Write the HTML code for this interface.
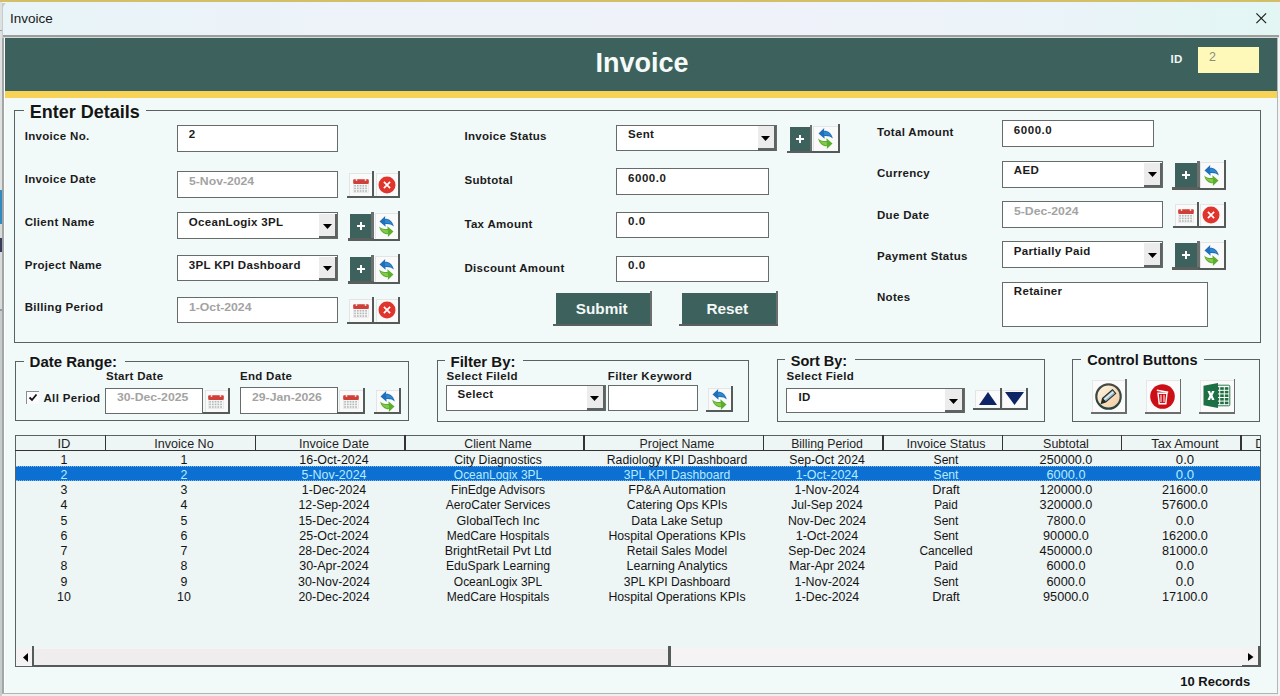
<!DOCTYPE html><html><head><meta charset="utf-8"><style>
html,body{margin:0;padding:0;}
body{width:1280px;height:696px;position:relative;overflow:hidden;background:#c3cdcb;font-family:"Liberation Sans", sans-serif;}
.a{position:absolute;}
.t{position:absolute;white-space:nowrap;}
</style></head><body>

<div class="a" style="left:0.00px;top:0.00px;width:1280.00px;height:1.60px;background:#d3bf68;"></div>
<div class="a" style="left:0.00px;top:1.60px;width:1280.00px;height:0.80px;background:#fbf6e0;"></div>
<div class="a" style="left:2.50px;top:1.50px;width:1277.50px;height:694.50px;background:#f2f9f9;border-top-left-radius:7px;border-top-right-radius:7px;"></div>
<div class="a" style="left:0.00px;top:2.40px;width:2.30px;height:187.60px;background:#dfe1e1;"></div>
<div class="a" style="left:0.00px;top:29.50px;width:2.30px;height:1.50px;background:#9a9a9a;"></div>
<div class="a" style="left:0.00px;top:190.00px;width:2.30px;height:34.00px;background:#2f8abd;"></div>
<div class="a" style="left:0.00px;top:224.00px;width:2.30px;height:86.00px;background:#d9dbdb;"></div>
<div class="a" style="left:0.00px;top:238.00px;width:2.30px;height:14.00px;background:#353c5c;"></div>
<div class="a" style="left:0.00px;top:309.00px;width:2.30px;height:1.50px;background:#9a9a9a;"></div>
<div class="a" style="left:0.00px;top:310.50px;width:2.30px;height:385.50px;background:#c6cccb;"></div>
<div class="a" style="left:1270.00px;top:2.40px;width:10.00px;height:37.60px;background:#eef1f1;"></div>
<div class="a" style="left:2.50px;top:1.50px;width:1276.00px;height:33.50px;background:linear-gradient(90deg,#e8f4f7 0%,#eef3f9 30%,#f0f2fa 60%,#eaf4f8 85%,#e2f6f4 100%);border-top-left-radius:7px;border-top-right-radius:7px;"></div>
<div class="t" style="left:10.00px;top:11.57px;font-size:13.5px;line-height:13.5px;font-weight:normal;color:#1a1a1a;">Invoice</div>
<svg class="a" style="left:1256px;top:13px" width="10.5" height="10.5" viewBox="0 0 10.5 10.5"><path d="M0.4 0.4L10.1 10.1M10.1 0.4L0.4 10.1" stroke="#1a1a1a" stroke-width="1.15"/></svg>
<div class="a" style="left:2.50px;top:35.00px;width:1276.00px;height:1.50px;background:#9c9e9e;"></div>
<div class="a" style="left:2.50px;top:36.50px;width:1276.00px;height:1.50px;background:#d3dad7;"></div>
<div class="a" style="left:2.30px;top:38.00px;width:2.00px;height:658.00px;background:#a3a6a6;"></div>
<div class="a" style="left:4.30px;top:38.00px;width:1.00px;height:658.00px;background:#ffffff;"></div>
<div class="a" style="left:1277.20px;top:38.00px;width:1.20px;height:658.00px;background:#b3b7b7;"></div>
<div class="a" style="left:1278.40px;top:38.00px;width:1.60px;height:658.00px;background:#f3f5f5;"></div>
<div class="a" style="left:2.30px;top:692.50px;width:1275.70px;height:1.50px;background:#b0b4b4;"></div>
<div class="a" style="left:2.30px;top:694.00px;width:1277.70px;height:2.00px;background:#eef0f0;"></div>
<div class="a" style="left:4.80px;top:38.00px;width:1272.40px;height:52.50px;background:#3d625e;"></div>
<div class="a" style="left:4.80px;top:90.50px;width:1272.40px;height:7.00px;background:#f6d257;"></div>
<div class="t" style="left:492.00px;width:300px;text-align:center;top:50.14px;font-size:27px;line-height:27px;font-weight:bold;color:#f6fbf9;">Invoice</div>
<div class="t" style="left:1170.50px;top:53.87px;font-size:11.5px;line-height:11.5px;font-weight:bold;color:#f2f6f4;letter-spacing:0.32px;">ID</div>
<div class="a" style="left:1198.00px;top:47.30px;width:61.40px;height:25.90px;background:#fff9b9;"></div>
<div class="t" style="left:1209.00px;top:51.42px;font-size:12.5px;line-height:12.5px;font-weight:normal;color:#8b8b80;">2</div>
<div class="a" style="left:14.00px;top:110.00px;width:1246.50px;height:232.50px;border:1.6px solid #56635f;box-sizing:border-box;"></div>
<div class="a" style="left:23.70px;top:107.00px;width:122.00px;height:7.00px;background:#f2f9f9;"></div>
<div class="t" style="left:29.70px;top:102.96px;font-size:18px;line-height:18px;font-weight:bold;color:#141414;">Enter Details</div>
<div class="t" style="left:24.70px;top:130.87px;font-size:11.5px;line-height:11.5px;font-weight:bold;color:#1b1b1b;letter-spacing:0.32px;">Invoice No.</div>
<div class="t" style="left:24.70px;top:174.07px;font-size:11.5px;line-height:11.5px;font-weight:bold;color:#1b1b1b;letter-spacing:0.32px;">Invoice Date</div>
<div class="t" style="left:24.70px;top:216.97px;font-size:11.5px;line-height:11.5px;font-weight:bold;color:#1b1b1b;letter-spacing:0.32px;">Client Name</div>
<div class="t" style="left:24.70px;top:259.97px;font-size:11.5px;line-height:11.5px;font-weight:bold;color:#1b1b1b;letter-spacing:0.32px;">Project Name</div>
<div class="t" style="left:24.70px;top:301.97px;font-size:11.5px;line-height:11.5px;font-weight:bold;color:#1b1b1b;letter-spacing:0.32px;">Billing Period</div>
<div class="a" style="left:176.80px;top:124.80px;width:161.50px;height:26.90px;background:#ffffff;border:1.6px solid #666c6a;box-sizing:border-box;"></div>
<div class="t" style="left:188.80px;top:128.77px;font-size:11.5px;line-height:11.5px;font-weight:bold;color:#1b1b1b;letter-spacing:0.55px;">2</div>
<div class="a" style="left:176.80px;top:170.90px;width:161.50px;height:27.00px;background:#ffffff;border:1.6px solid #666c6a;box-sizing:border-box;"></div>
<div class="t" style="left:188.80px;top:176.49px;font-size:11px;line-height:11px;font-weight:bold;color:#a3a3a3;transform:scaleX(1.110);transform-origin:0 0;">5-Nov-2024</div>
<div class="a" style="left:349.00px;top:173.00px;width:23.20px;height:23.10px;background:#fafafa;border-top:1px solid #e4e6e6;border-left:1px solid #e4e6e6;box-sizing:border-box;"></div>
<div class="a" style="left:372.20px;top:171.00px;width:2.00px;height:27.10px;background:#555b59;"></div>
<div class="a" style="left:347.00px;top:196.10px;width:27.20px;height:2.00px;background:#555b59;"></div>
<svg class="a" style="left:351.60px;top:176.55px" width="18" height="16" viewBox="0 0 18 16">
<rect x="1.5" y="3" width="15" height="12.5" fill="#f7f7f7" stroke="#e0e0e0" stroke-width="0.6"/>
<rect x="1.2" y="2.2" width="15.6" height="4.8" rx="1.2" fill="#cf4038"/>
<circle cx="4.5" cy="3" r="0.9" fill="#fbe0dc"/><circle cx="13.5" cy="3" r="0.9" fill="#fbe0dc"/>
<g fill="#b4b8b8"><rect x="2.20" y="8.00" width="1.7" height="1.6"/><rect x="4.95" y="8.00" width="1.7" height="1.6"/><rect x="7.70" y="8.00" width="1.7" height="1.6"/><rect x="10.45" y="8.00" width="1.7" height="1.6"/><rect x="13.20" y="8.00" width="1.7" height="1.6"/><rect x="2.20" y="10.60" width="1.7" height="1.6"/><rect x="4.95" y="10.60" width="1.7" height="1.6"/><rect x="7.70" y="10.60" width="1.7" height="1.6"/><rect x="10.45" y="10.60" width="1.7" height="1.6"/><rect x="13.20" y="10.60" width="1.7" height="1.6"/><rect x="2.20" y="13.20" width="1.7" height="1.6"/><rect x="4.95" y="13.20" width="1.7" height="1.6"/><rect x="7.70" y="13.20" width="1.7" height="1.6"/><rect x="10.45" y="13.20" width="1.7" height="1.6"/><rect x="13.20" y="13.20" width="1.7" height="1.6"/></g>
</svg>
<div class="a" style="left:376.00px;top:173.00px;width:22.40px;height:23.10px;background:#fafafa;border-top:1px solid #e4e6e6;border-left:1px solid #e4e6e6;box-sizing:border-box;"></div>
<div class="a" style="left:398.40px;top:171.00px;width:2.00px;height:27.10px;background:#555b59;"></div>
<div class="a" style="left:374.00px;top:196.10px;width:26.40px;height:2.00px;background:#555b59;"></div>
<svg class="a" style="left:378px;top:176px" width="18" height="18" viewBox="0 0 18 18">
<circle cx="9" cy="9" r="8.5" fill="#e0352c"/><path d="M5.9 5.9L12.1 12.1M12.1 5.9L5.9 12.1" stroke="#fff" stroke-width="1.7"/></svg>
<div class="a" style="left:176.80px;top:212.40px;width:161.50px;height:26.40px;background:#ffffff;border:1.6px solid #666c6a;box-sizing:border-box;"></div>
<div class="a" style="left:318.80px;top:214.00px;width:18.50px;height:24.30px;background:#ececec;"></div>
<div class="a" style="left:335.30px;top:214.00px;width:2.00px;height:24.30px;background:#5d6361;"></div>
<div class="a" style="left:318.80px;top:235.80px;width:18.50px;height:2.50px;background:#5d6361;"></div>
<svg class="a" style="left:322.55px;top:223.65px" width="9" height="5" viewBox="0 0 9 5"><path d="M0 0H9L4.5 5Z" fill="#000"/></svg>
<div class="t" style="left:188.80px;top:217.47px;font-size:11.5px;line-height:11.5px;font-weight:bold;color:#1b1b1b;letter-spacing:0.32px;">OceanLogix 3PL</div>
<div class="a" style="left:350.20px;top:214.00px;width:21.10px;height:24.00px;background:#3d625e;"></div>
<div class="a" style="left:371.30px;top:212.00px;width:2.50px;height:28.50px;background:#6c706f;"></div>
<div class="a" style="left:347.70px;top:238.00px;width:26.10px;height:2.50px;background:#5a5f5d;"></div>
<svg class="a" style="left:355.75px;top:221.00px" width="10" height="10" viewBox="0 0 10 10"><path d="M5 1V9M1 5H9" stroke="#fff" stroke-width="2"/></svg>
<div class="a" style="left:374.60px;top:212.50px;width:23.80px;height:26.40px;background:#fafafa;border-top:1px solid #e4e6e6;border-left:1px solid #e4e6e6;box-sizing:border-box;"></div>
<div class="a" style="left:398.40px;top:210.50px;width:2.00px;height:30.40px;background:#555b59;"></div>
<div class="a" style="left:372.60px;top:238.90px;width:27.80px;height:2.00px;background:#555b59;"></div>
<svg class="a" style="left:378.00px;top:214.70px" width="17" height="22" viewBox="0 0 17 22">
<path d="M1.5 6.5 L7.2 1 L7 3.8 C10.8 3.6 14.8 6.2 15.8 11.6 C13.8 9.6 11.2 8.9 7.4 9.1 L7.6 11.8 Z" fill="#1f6fba"/>
<path d="M7 4.6 C10 4.6 13 6.5 14.5 9.5 C12.5 8.2 10 7.8 7.2 8 Z" fill="#3a9ad8" opacity="0.6"/>
<g transform="rotate(180 8.5 11.5)"><path d="M1.5 6.5 L7.2 1 L7 3.8 C10.8 3.6 14.8 6.2 15.8 11.6 C13.8 9.6 11.2 8.9 7.4 9.1 L7.6 11.8 Z" fill="#5aae2e"/>
<path d="M7 4.6 C10 4.6 13 6.5 14.5 9.5 C12.5 8.2 10 7.8 7.2 8 Z" fill="#9ad35a" opacity="0.7"/></g>
</svg>
<div class="a" style="left:176.80px;top:255.20px;width:161.50px;height:26.20px;background:#ffffff;border:1.6px solid #666c6a;box-sizing:border-box;"></div>
<div class="a" style="left:318.80px;top:256.80px;width:18.50px;height:24.10px;background:#ececec;"></div>
<div class="a" style="left:335.30px;top:256.80px;width:2.00px;height:24.10px;background:#5d6361;"></div>
<div class="a" style="left:318.80px;top:278.40px;width:18.50px;height:2.50px;background:#5d6361;"></div>
<svg class="a" style="left:322.55px;top:266.35px" width="9" height="5" viewBox="0 0 9 5"><path d="M0 0H9L4.5 5Z" fill="#000"/></svg>
<div class="t" style="left:188.80px;top:260.27px;font-size:11.5px;line-height:11.5px;font-weight:bold;color:#1b1b1b;letter-spacing:0.32px;">3PL KPI Dashboard</div>
<div class="a" style="left:350.20px;top:257.00px;width:21.10px;height:24.00px;background:#3d625e;"></div>
<div class="a" style="left:371.30px;top:255.00px;width:2.50px;height:28.50px;background:#6c706f;"></div>
<div class="a" style="left:347.70px;top:281.00px;width:26.10px;height:2.50px;background:#5a5f5d;"></div>
<svg class="a" style="left:355.75px;top:264.00px" width="10" height="10" viewBox="0 0 10 10"><path d="M5 1V9M1 5H9" stroke="#fff" stroke-width="2"/></svg>
<div class="a" style="left:374.60px;top:255.50px;width:23.80px;height:26.10px;background:#fafafa;border-top:1px solid #e4e6e6;border-left:1px solid #e4e6e6;box-sizing:border-box;"></div>
<div class="a" style="left:398.40px;top:253.50px;width:2.00px;height:30.10px;background:#555b59;"></div>
<div class="a" style="left:372.60px;top:281.60px;width:27.80px;height:2.00px;background:#555b59;"></div>
<svg class="a" style="left:378.00px;top:257.55px" width="17" height="22" viewBox="0 0 17 22">
<path d="M1.5 6.5 L7.2 1 L7 3.8 C10.8 3.6 14.8 6.2 15.8 11.6 C13.8 9.6 11.2 8.9 7.4 9.1 L7.6 11.8 Z" fill="#1f6fba"/>
<path d="M7 4.6 C10 4.6 13 6.5 14.5 9.5 C12.5 8.2 10 7.8 7.2 8 Z" fill="#3a9ad8" opacity="0.6"/>
<g transform="rotate(180 8.5 11.5)"><path d="M1.5 6.5 L7.2 1 L7 3.8 C10.8 3.6 14.8 6.2 15.8 11.6 C13.8 9.6 11.2 8.9 7.4 9.1 L7.6 11.8 Z" fill="#5aae2e"/>
<path d="M7 4.6 C10 4.6 13 6.5 14.5 9.5 C12.5 8.2 10 7.8 7.2 8 Z" fill="#9ad35a" opacity="0.7"/></g>
</svg>
<div class="a" style="left:176.80px;top:296.50px;width:161.50px;height:26.30px;background:#ffffff;border:1.6px solid #666c6a;box-sizing:border-box;"></div>
<div class="t" style="left:188.80px;top:302.09px;font-size:11px;line-height:11px;font-weight:bold;color:#a3a3a3;transform:scaleX(1.110);transform-origin:0 0;">1-Oct-2024</div>
<div class="a" style="left:349.00px;top:298.50px;width:23.20px;height:23.00px;background:#fafafa;border-top:1px solid #e4e6e6;border-left:1px solid #e4e6e6;box-sizing:border-box;"></div>
<div class="a" style="left:372.20px;top:296.50px;width:2.00px;height:27.00px;background:#555b59;"></div>
<div class="a" style="left:347.00px;top:321.50px;width:27.20px;height:2.00px;background:#555b59;"></div>
<svg class="a" style="left:351.60px;top:302.00px" width="18" height="16" viewBox="0 0 18 16">
<rect x="1.5" y="3" width="15" height="12.5" fill="#f7f7f7" stroke="#e0e0e0" stroke-width="0.6"/>
<rect x="1.2" y="2.2" width="15.6" height="4.8" rx="1.2" fill="#cf4038"/>
<circle cx="4.5" cy="3" r="0.9" fill="#fbe0dc"/><circle cx="13.5" cy="3" r="0.9" fill="#fbe0dc"/>
<g fill="#b4b8b8"><rect x="2.20" y="8.00" width="1.7" height="1.6"/><rect x="4.95" y="8.00" width="1.7" height="1.6"/><rect x="7.70" y="8.00" width="1.7" height="1.6"/><rect x="10.45" y="8.00" width="1.7" height="1.6"/><rect x="13.20" y="8.00" width="1.7" height="1.6"/><rect x="2.20" y="10.60" width="1.7" height="1.6"/><rect x="4.95" y="10.60" width="1.7" height="1.6"/><rect x="7.70" y="10.60" width="1.7" height="1.6"/><rect x="10.45" y="10.60" width="1.7" height="1.6"/><rect x="13.20" y="10.60" width="1.7" height="1.6"/><rect x="2.20" y="13.20" width="1.7" height="1.6"/><rect x="4.95" y="13.20" width="1.7" height="1.6"/><rect x="7.70" y="13.20" width="1.7" height="1.6"/><rect x="10.45" y="13.20" width="1.7" height="1.6"/><rect x="13.20" y="13.20" width="1.7" height="1.6"/></g>
</svg>
<div class="a" style="left:376.00px;top:298.50px;width:22.40px;height:23.00px;background:#fafafa;border-top:1px solid #e4e6e6;border-left:1px solid #e4e6e6;box-sizing:border-box;"></div>
<div class="a" style="left:398.40px;top:296.50px;width:2.00px;height:27.00px;background:#555b59;"></div>
<div class="a" style="left:374.00px;top:321.50px;width:26.40px;height:2.00px;background:#555b59;"></div>
<svg class="a" style="left:378px;top:301px" width="18" height="18" viewBox="0 0 18 18">
<circle cx="9" cy="9" r="8.5" fill="#e0352c"/><path d="M5.9 5.9L12.1 12.1M12.1 5.9L5.9 12.1" stroke="#fff" stroke-width="1.7"/></svg>
<div class="t" style="left:464.40px;top:130.87px;font-size:11.5px;line-height:11.5px;font-weight:bold;color:#1b1b1b;letter-spacing:0.32px;">Invoice Status</div>
<div class="t" style="left:464.40px;top:174.62px;font-size:11.5px;line-height:11.5px;font-weight:bold;color:#1b1b1b;letter-spacing:0.32px;">Subtotal</div>
<div class="t" style="left:464.40px;top:219.17px;font-size:11.5px;line-height:11.5px;font-weight:bold;color:#1b1b1b;letter-spacing:0.32px;">Tax Amount</div>
<div class="t" style="left:464.40px;top:263.37px;font-size:11.5px;line-height:11.5px;font-weight:bold;color:#1b1b1b;letter-spacing:0.32px;">Discount Amount</div>
<div class="a" style="left:616.20px;top:124.80px;width:160.80px;height:26.60px;background:#ffffff;border:1.6px solid #666c6a;box-sizing:border-box;"></div>
<div class="a" style="left:757.50px;top:126.40px;width:18.50px;height:24.50px;background:#ececec;"></div>
<div class="a" style="left:774.00px;top:126.40px;width:2.00px;height:24.50px;background:#5d6361;"></div>
<div class="a" style="left:757.50px;top:148.40px;width:18.50px;height:2.50px;background:#5d6361;"></div>
<svg class="a" style="left:761.25px;top:136.15px" width="9" height="5" viewBox="0 0 9 5"><path d="M0 0H9L4.5 5Z" fill="#000"/></svg>
<div class="t" style="left:628.00px;top:128.77px;font-size:11.5px;line-height:11.5px;font-weight:bold;color:#1b1b1b;letter-spacing:0.32px;">Sent</div>
<div class="a" style="left:789.50px;top:127.00px;width:20.00px;height:23.50px;background:#3d625e;"></div>
<div class="a" style="left:809.50px;top:125.00px;width:2.50px;height:28.00px;background:#6c706f;"></div>
<div class="a" style="left:787.00px;top:150.50px;width:25.00px;height:2.50px;background:#5a5f5d;"></div>
<svg class="a" style="left:794.50px;top:133.75px" width="10" height="10" viewBox="0 0 10 10"><path d="M5 1V9M1 5H9" stroke="#fff" stroke-width="2"/></svg>
<div class="a" style="left:813.00px;top:125.50px;width:24.50px;height:25.50px;background:#fafafa;border-top:1px solid #e4e6e6;border-left:1px solid #e4e6e6;box-sizing:border-box;"></div>
<div class="a" style="left:837.50px;top:123.50px;width:2.00px;height:29.50px;background:#555b59;"></div>
<div class="a" style="left:811.00px;top:151.00px;width:28.50px;height:2.00px;background:#555b59;"></div>
<svg class="a" style="left:816.75px;top:127.25px" width="17" height="22" viewBox="0 0 17 22">
<path d="M1.5 6.5 L7.2 1 L7 3.8 C10.8 3.6 14.8 6.2 15.8 11.6 C13.8 9.6 11.2 8.9 7.4 9.1 L7.6 11.8 Z" fill="#1f6fba"/>
<path d="M7 4.6 C10 4.6 13 6.5 14.5 9.5 C12.5 8.2 10 7.8 7.2 8 Z" fill="#3a9ad8" opacity="0.6"/>
<g transform="rotate(180 8.5 11.5)"><path d="M1.5 6.5 L7.2 1 L7 3.8 C10.8 3.6 14.8 6.2 15.8 11.6 C13.8 9.6 11.2 8.9 7.4 9.1 L7.6 11.8 Z" fill="#5aae2e"/>
<path d="M7 4.6 C10 4.6 13 6.5 14.5 9.5 C12.5 8.2 10 7.8 7.2 8 Z" fill="#9ad35a" opacity="0.7"/></g>
</svg>
<div class="a" style="left:616.20px;top:168.40px;width:152.80px;height:27.10px;background:#ffffff;border:1.6px solid #666c6a;box-sizing:border-box;"></div>
<div class="t" style="left:628.00px;top:173.27px;font-size:11.5px;line-height:11.5px;font-weight:bold;color:#1b1b1b;letter-spacing:0.55px;">6000.0</div>
<div class="a" style="left:616.20px;top:211.90px;width:152.80px;height:26.50px;background:#ffffff;border:1.6px solid #666c6a;box-sizing:border-box;"></div>
<div class="t" style="left:628.00px;top:216.37px;font-size:11.5px;line-height:11.5px;font-weight:bold;color:#1b1b1b;letter-spacing:0.55px;">0.0</div>
<div class="a" style="left:616.20px;top:255.60px;width:152.80px;height:26.70px;background:#ffffff;border:1.6px solid #666c6a;box-sizing:border-box;"></div>
<div class="t" style="left:628.00px;top:260.07px;font-size:11.5px;line-height:11.5px;font-weight:bold;color:#1b1b1b;letter-spacing:0.55px;">0.0</div>
<div class="a" style="left:556.25px;top:293.20px;width:93.45px;height:30.50px;background:#3d625e;"></div>
<div class="a" style="left:649.70px;top:290.60px;width:2.00px;height:35.70px;background:#6a6f6d;"></div>
<div class="a" style="left:553.25px;top:323.70px;width:98.45px;height:2.60px;background:#5c6160;"></div>
<div class="t" style="left:501.68px;width:200px;text-align:center;top:300.55px;font-size:15.3px;line-height:15.3px;font-weight:bold;color:#f4f8f6;">Submit</div>
<div class="a" style="left:681.80px;top:293.20px;width:93.80px;height:30.50px;background:#3d625e;"></div>
<div class="a" style="left:775.60px;top:290.60px;width:2.00px;height:35.70px;background:#6a6f6d;"></div>
<div class="a" style="left:678.80px;top:323.70px;width:98.80px;height:2.60px;background:#5c6160;"></div>
<div class="t" style="left:627.40px;width:200px;text-align:center;top:300.55px;font-size:15.3px;line-height:15.3px;font-weight:bold;color:#f4f8f6;">Reset</div>
<div class="t" style="left:877.00px;top:126.87px;font-size:11.5px;line-height:11.5px;font-weight:bold;color:#1b1b1b;letter-spacing:0.32px;">Total Amount</div>
<div class="t" style="left:877.00px;top:168.07px;font-size:11.5px;line-height:11.5px;font-weight:bold;color:#1b1b1b;letter-spacing:0.32px;">Currency</div>
<div class="t" style="left:877.00px;top:210.07px;font-size:11.5px;line-height:11.5px;font-weight:bold;color:#1b1b1b;letter-spacing:0.32px;">Due Date</div>
<div class="t" style="left:877.00px;top:250.97px;font-size:11.5px;line-height:11.5px;font-weight:bold;color:#1b1b1b;letter-spacing:0.32px;">Payment Status</div>
<div class="t" style="left:877.00px;top:292.17px;font-size:11.5px;line-height:11.5px;font-weight:bold;color:#1b1b1b;letter-spacing:0.32px;">Notes</div>
<div class="a" style="left:1002.00px;top:120.20px;width:152.20px;height:26.50px;background:#ffffff;border:1.6px solid #666c6a;box-sizing:border-box;"></div>
<div class="t" style="left:1013.80px;top:124.67px;font-size:11.5px;line-height:11.5px;font-weight:bold;color:#1b1b1b;letter-spacing:0.55px;">6000.0</div>
<div class="a" style="left:1002.00px;top:161.00px;width:161.30px;height:26.50px;background:#ffffff;border:1.6px solid #666c6a;box-sizing:border-box;"></div>
<div class="a" style="left:1143.80px;top:162.60px;width:18.50px;height:24.40px;background:#ececec;"></div>
<div class="a" style="left:1160.30px;top:162.60px;width:2.00px;height:24.40px;background:#5d6361;"></div>
<div class="a" style="left:1143.80px;top:184.50px;width:18.50px;height:2.50px;background:#5d6361;"></div>
<svg class="a" style="left:1147.55px;top:172.30px" width="9" height="5" viewBox="0 0 9 5"><path d="M0 0H9L4.5 5Z" fill="#000"/></svg>
<div class="t" style="left:1013.80px;top:165.37px;font-size:11.5px;line-height:11.5px;font-weight:bold;color:#1b1b1b;letter-spacing:0.32px;">AED</div>
<div class="a" style="left:1174.60px;top:163.00px;width:22.70px;height:24.00px;background:#3d625e;"></div>
<div class="a" style="left:1197.30px;top:161.00px;width:2.50px;height:28.50px;background:#6c706f;"></div>
<div class="a" style="left:1172.10px;top:187.00px;width:27.70px;height:2.50px;background:#5a5f5d;"></div>
<svg class="a" style="left:1180.95px;top:170.00px" width="10" height="10" viewBox="0 0 10 10"><path d="M5 1V9M1 5H9" stroke="#fff" stroke-width="2"/></svg>
<div class="a" style="left:1199.50px;top:161.50px;width:24.00px;height:26.20px;background:#fafafa;border-top:1px solid #e4e6e6;border-left:1px solid #e4e6e6;box-sizing:border-box;"></div>
<div class="a" style="left:1223.50px;top:159.50px;width:2.00px;height:30.20px;background:#555b59;"></div>
<div class="a" style="left:1197.50px;top:187.70px;width:28.00px;height:2.00px;background:#555b59;"></div>
<svg class="a" style="left:1203.00px;top:163.60px" width="17" height="22" viewBox="0 0 17 22">
<path d="M1.5 6.5 L7.2 1 L7 3.8 C10.8 3.6 14.8 6.2 15.8 11.6 C13.8 9.6 11.2 8.9 7.4 9.1 L7.6 11.8 Z" fill="#1f6fba"/>
<path d="M7 4.6 C10 4.6 13 6.5 14.5 9.5 C12.5 8.2 10 7.8 7.2 8 Z" fill="#3a9ad8" opacity="0.6"/>
<g transform="rotate(180 8.5 11.5)"><path d="M1.5 6.5 L7.2 1 L7 3.8 C10.8 3.6 14.8 6.2 15.8 11.6 C13.8 9.6 11.2 8.9 7.4 9.1 L7.6 11.8 Z" fill="#5aae2e"/>
<path d="M7 4.6 C10 4.6 13 6.5 14.5 9.5 C12.5 8.2 10 7.8 7.2 8 Z" fill="#9ad35a" opacity="0.7"/></g>
</svg>
<div class="a" style="left:1002.00px;top:201.30px;width:161.30px;height:26.50px;background:#ffffff;border:1.6px solid #666c6a;box-sizing:border-box;"></div>
<div class="t" style="left:1013.80px;top:206.29px;font-size:11px;line-height:11px;font-weight:bold;color:#a3a3a3;transform:scaleX(1.110);transform-origin:0 0;">5-Dec-2024</div>
<div class="a" style="left:1174.60px;top:203.50px;width:22.70px;height:22.50px;background:#fafafa;border-top:1px solid #e4e6e6;border-left:1px solid #e4e6e6;box-sizing:border-box;"></div>
<div class="a" style="left:1197.30px;top:201.50px;width:2.00px;height:26.50px;background:#555b59;"></div>
<div class="a" style="left:1172.60px;top:226.00px;width:26.70px;height:2.00px;background:#555b59;"></div>
<svg class="a" style="left:1176.95px;top:206.75px" width="18" height="16" viewBox="0 0 18 16">
<rect x="1.5" y="3" width="15" height="12.5" fill="#f7f7f7" stroke="#e0e0e0" stroke-width="0.6"/>
<rect x="1.2" y="2.2" width="15.6" height="4.8" rx="1.2" fill="#cf4038"/>
<circle cx="4.5" cy="3" r="0.9" fill="#fbe0dc"/><circle cx="13.5" cy="3" r="0.9" fill="#fbe0dc"/>
<g fill="#b4b8b8"><rect x="2.20" y="8.00" width="1.7" height="1.6"/><rect x="4.95" y="8.00" width="1.7" height="1.6"/><rect x="7.70" y="8.00" width="1.7" height="1.6"/><rect x="10.45" y="8.00" width="1.7" height="1.6"/><rect x="13.20" y="8.00" width="1.7" height="1.6"/><rect x="2.20" y="10.60" width="1.7" height="1.6"/><rect x="4.95" y="10.60" width="1.7" height="1.6"/><rect x="7.70" y="10.60" width="1.7" height="1.6"/><rect x="10.45" y="10.60" width="1.7" height="1.6"/><rect x="13.20" y="10.60" width="1.7" height="1.6"/><rect x="2.20" y="13.20" width="1.7" height="1.6"/><rect x="4.95" y="13.20" width="1.7" height="1.6"/><rect x="7.70" y="13.20" width="1.7" height="1.6"/><rect x="10.45" y="13.20" width="1.7" height="1.6"/><rect x="13.20" y="13.20" width="1.7" height="1.6"/></g>
</svg>
<div class="a" style="left:1199.50px;top:203.50px;width:24.00px;height:22.50px;background:#fafafa;border-top:1px solid #e4e6e6;border-left:1px solid #e4e6e6;box-sizing:border-box;"></div>
<div class="a" style="left:1223.50px;top:201.50px;width:2.00px;height:26.50px;background:#555b59;"></div>
<div class="a" style="left:1197.50px;top:226.00px;width:28.00px;height:2.00px;background:#555b59;"></div>
<svg class="a" style="left:1202px;top:206px" width="18" height="18" viewBox="0 0 18 18">
<circle cx="9" cy="9" r="8.5" fill="#e0352c"/><path d="M5.9 5.9L12.1 12.1M12.1 5.9L5.9 12.1" stroke="#fff" stroke-width="1.7"/></svg>
<div class="a" style="left:1002.00px;top:241.20px;width:161.30px;height:26.60px;background:#ffffff;border:1.6px solid #666c6a;box-sizing:border-box;"></div>
<div class="a" style="left:1143.80px;top:242.80px;width:18.50px;height:24.50px;background:#ececec;"></div>
<div class="a" style="left:1160.30px;top:242.80px;width:2.00px;height:24.50px;background:#5d6361;"></div>
<div class="a" style="left:1143.80px;top:264.80px;width:18.50px;height:2.50px;background:#5d6361;"></div>
<svg class="a" style="left:1147.55px;top:252.55px" width="9" height="5" viewBox="0 0 9 5"><path d="M0 0H9L4.5 5Z" fill="#000"/></svg>
<div class="t" style="left:1013.80px;top:245.87px;font-size:11.5px;line-height:11.5px;font-weight:bold;color:#1b1b1b;letter-spacing:0.32px;">Partially Paid</div>
<div class="a" style="left:1174.60px;top:243.20px;width:22.70px;height:24.10px;background:#3d625e;"></div>
<div class="a" style="left:1197.30px;top:241.20px;width:2.50px;height:28.60px;background:#6c706f;"></div>
<div class="a" style="left:1172.10px;top:267.30px;width:27.70px;height:2.50px;background:#5a5f5d;"></div>
<svg class="a" style="left:1180.95px;top:250.25px" width="10" height="10" viewBox="0 0 10 10"><path d="M5 1V9M1 5H9" stroke="#fff" stroke-width="2"/></svg>
<div class="a" style="left:1199.50px;top:241.70px;width:24.00px;height:26.30px;background:#fafafa;border-top:1px solid #e4e6e6;border-left:1px solid #e4e6e6;box-sizing:border-box;"></div>
<div class="a" style="left:1223.50px;top:239.70px;width:2.00px;height:30.30px;background:#555b59;"></div>
<div class="a" style="left:1197.50px;top:268.00px;width:28.00px;height:2.00px;background:#555b59;"></div>
<svg class="a" style="left:1203.00px;top:243.85px" width="17" height="22" viewBox="0 0 17 22">
<path d="M1.5 6.5 L7.2 1 L7 3.8 C10.8 3.6 14.8 6.2 15.8 11.6 C13.8 9.6 11.2 8.9 7.4 9.1 L7.6 11.8 Z" fill="#1f6fba"/>
<path d="M7 4.6 C10 4.6 13 6.5 14.5 9.5 C12.5 8.2 10 7.8 7.2 8 Z" fill="#3a9ad8" opacity="0.6"/>
<g transform="rotate(180 8.5 11.5)"><path d="M1.5 6.5 L7.2 1 L7 3.8 C10.8 3.6 14.8 6.2 15.8 11.6 C13.8 9.6 11.2 8.9 7.4 9.1 L7.6 11.8 Z" fill="#5aae2e"/>
<path d="M7 4.6 C10 4.6 13 6.5 14.5 9.5 C12.5 8.2 10 7.8 7.2 8 Z" fill="#9ad35a" opacity="0.7"/></g>
</svg>
<div class="a" style="left:1002.00px;top:281.90px;width:205.60px;height:44.80px;background:#ffffff;border:1.6px solid #666c6a;box-sizing:border-box;"></div>
<div class="t" style="left:1013.80px;top:285.67px;font-size:11.5px;line-height:11.5px;font-weight:bold;color:#1b1b1b;letter-spacing:0.32px;">Retainer</div>
<div class="a" style="left:14.80px;top:360.60px;width:394.00px;height:60.70px;border:1.6px solid #56635f;box-sizing:border-box;"></div>
<div class="a" style="left:23.60px;top:357.60px;width:101.00px;height:7.00px;background:#f2f9f9;"></div>
<div class="t" style="left:29.60px;top:353.80px;font-size:15px;line-height:15px;font-weight:bold;color:#141414;">Date Range:</div>
<div class="t" style="left:105.90px;top:371.17px;font-size:11.5px;line-height:11.5px;font-weight:bold;color:#1b1b1b;letter-spacing:0.32px;">Start Date</div>
<div class="t" style="left:239.90px;top:371.17px;font-size:11.5px;line-height:11.5px;font-weight:bold;color:#1b1b1b;letter-spacing:0.32px;">End Date</div>
<div class="a" style="left:25.50px;top:391.40px;width:13.10px;height:12.20px;background:#fbfbfb;border-top:1.5px solid #8a8f8e;border-left:1.5px solid #8a8f8e;box-sizing:border-box;"></div>
<svg class="a" style="left:27.5px;top:393px" width="10" height="9" viewBox="0 0 10 9"><path d="M1.5 4.5L4 7L8.5 1.5" stroke="#111" stroke-width="1.8" fill="none"/></svg>
<div class="t" style="left:43.50px;top:392.87px;font-size:11.5px;line-height:11.5px;font-weight:bold;color:#1b1b1b;letter-spacing:0.32px;">All Period</div>
<div class="a" style="left:105.40px;top:387.70px;width:98.10px;height:26.20px;background:#ffffff;border:1.6px solid #666c6a;box-sizing:border-box;"></div>
<div class="t" style="left:117.40px;top:392.09px;font-size:11px;line-height:11px;font-weight:bold;color:#a3a3a3;transform:scaleX(1.110);transform-origin:0 0;">30-Dec-2025</div>
<div class="a" style="left:204.50px;top:389.50px;width:23.80px;height:22.50px;background:#fafafa;border-top:1px solid #e4e6e6;border-left:1px solid #e4e6e6;box-sizing:border-box;"></div>
<div class="a" style="left:228.30px;top:387.50px;width:2.00px;height:26.50px;background:#555b59;"></div>
<div class="a" style="left:202.50px;top:412.00px;width:27.80px;height:2.00px;background:#555b59;"></div>
<svg class="a" style="left:207.40px;top:392.75px" width="18" height="16" viewBox="0 0 18 16">
<rect x="1.5" y="3" width="15" height="12.5" fill="#f7f7f7" stroke="#e0e0e0" stroke-width="0.6"/>
<rect x="1.2" y="2.2" width="15.6" height="4.8" rx="1.2" fill="#cf4038"/>
<circle cx="4.5" cy="3" r="0.9" fill="#fbe0dc"/><circle cx="13.5" cy="3" r="0.9" fill="#fbe0dc"/>
<g fill="#b4b8b8"><rect x="2.20" y="8.00" width="1.7" height="1.6"/><rect x="4.95" y="8.00" width="1.7" height="1.6"/><rect x="7.70" y="8.00" width="1.7" height="1.6"/><rect x="10.45" y="8.00" width="1.7" height="1.6"/><rect x="13.20" y="8.00" width="1.7" height="1.6"/><rect x="2.20" y="10.60" width="1.7" height="1.6"/><rect x="4.95" y="10.60" width="1.7" height="1.6"/><rect x="7.70" y="10.60" width="1.7" height="1.6"/><rect x="10.45" y="10.60" width="1.7" height="1.6"/><rect x="13.20" y="10.60" width="1.7" height="1.6"/><rect x="2.20" y="13.20" width="1.7" height="1.6"/><rect x="4.95" y="13.20" width="1.7" height="1.6"/><rect x="7.70" y="13.20" width="1.7" height="1.6"/><rect x="10.45" y="13.20" width="1.7" height="1.6"/><rect x="13.20" y="13.20" width="1.7" height="1.6"/></g>
</svg>
<div class="a" style="left:239.50px;top:387.10px;width:98.00px;height:26.65px;background:#ffffff;border:1.6px solid #666c6a;box-sizing:border-box;"></div>
<div class="t" style="left:251.50px;top:392.09px;font-size:11px;line-height:11px;font-weight:bold;color:#a3a3a3;transform:scaleX(1.110);transform-origin:0 0;">29-Jan-2026</div>
<div class="a" style="left:338.50px;top:389.50px;width:24.80px;height:22.50px;background:#fafafa;border-top:1px solid #e4e6e6;border-left:1px solid #e4e6e6;box-sizing:border-box;"></div>
<div class="a" style="left:363.30px;top:387.50px;width:2.00px;height:26.50px;background:#555b59;"></div>
<div class="a" style="left:336.50px;top:412.00px;width:28.80px;height:2.00px;background:#555b59;"></div>
<svg class="a" style="left:341.90px;top:392.75px" width="18" height="16" viewBox="0 0 18 16">
<rect x="1.5" y="3" width="15" height="12.5" fill="#f7f7f7" stroke="#e0e0e0" stroke-width="0.6"/>
<rect x="1.2" y="2.2" width="15.6" height="4.8" rx="1.2" fill="#cf4038"/>
<circle cx="4.5" cy="3" r="0.9" fill="#fbe0dc"/><circle cx="13.5" cy="3" r="0.9" fill="#fbe0dc"/>
<g fill="#b4b8b8"><rect x="2.20" y="8.00" width="1.7" height="1.6"/><rect x="4.95" y="8.00" width="1.7" height="1.6"/><rect x="7.70" y="8.00" width="1.7" height="1.6"/><rect x="10.45" y="8.00" width="1.7" height="1.6"/><rect x="13.20" y="8.00" width="1.7" height="1.6"/><rect x="2.20" y="10.60" width="1.7" height="1.6"/><rect x="4.95" y="10.60" width="1.7" height="1.6"/><rect x="7.70" y="10.60" width="1.7" height="1.6"/><rect x="10.45" y="10.60" width="1.7" height="1.6"/><rect x="13.20" y="10.60" width="1.7" height="1.6"/><rect x="2.20" y="13.20" width="1.7" height="1.6"/><rect x="4.95" y="13.20" width="1.7" height="1.6"/><rect x="7.70" y="13.20" width="1.7" height="1.6"/><rect x="10.45" y="13.20" width="1.7" height="1.6"/><rect x="13.20" y="13.20" width="1.7" height="1.6"/></g>
</svg>
<div class="a" style="left:376.00px;top:389.50px;width:23.40px;height:22.50px;background:#fafafa;border-top:1px solid #e4e6e6;border-left:1px solid #e4e6e6;box-sizing:border-box;"></div>
<div class="a" style="left:399.40px;top:387.50px;width:2.00px;height:26.50px;background:#555b59;"></div>
<div class="a" style="left:374.00px;top:412.00px;width:27.40px;height:2.00px;background:#555b59;"></div>
<svg class="a" style="left:379.20px;top:389.75px" width="17" height="22" viewBox="0 0 17 22">
<path d="M1.5 6.5 L7.2 1 L7 3.8 C10.8 3.6 14.8 6.2 15.8 11.6 C13.8 9.6 11.2 8.9 7.4 9.1 L7.6 11.8 Z" fill="#1f6fba"/>
<path d="M7 4.6 C10 4.6 13 6.5 14.5 9.5 C12.5 8.2 10 7.8 7.2 8 Z" fill="#3a9ad8" opacity="0.6"/>
<g transform="rotate(180 8.5 11.5)"><path d="M1.5 6.5 L7.2 1 L7 3.8 C10.8 3.6 14.8 6.2 15.8 11.6 C13.8 9.6 11.2 8.9 7.4 9.1 L7.6 11.8 Z" fill="#5aae2e"/>
<path d="M7 4.6 C10 4.6 13 6.5 14.5 9.5 C12.5 8.2 10 7.8 7.2 8 Z" fill="#9ad35a" opacity="0.7"/></g>
</svg>
<div class="a" style="left:436.50px;top:360.10px;width:312.00px;height:61.90px;border:1.6px solid #56635f;box-sizing:border-box;"></div>
<div class="a" style="left:444.50px;top:357.10px;width:78.00px;height:7.00px;background:#f2f9f9;"></div>
<div class="t" style="left:450.50px;top:353.80px;font-size:15px;line-height:15px;font-weight:bold;color:#141414;">Filter By:</div>
<div class="t" style="left:446.60px;top:371.17px;font-size:11.5px;line-height:11.5px;font-weight:bold;color:#1b1b1b;letter-spacing:0.32px;">Select Fileld</div>
<div class="t" style="left:607.80px;top:371.17px;font-size:11.5px;line-height:11.5px;font-weight:bold;color:#1b1b1b;letter-spacing:0.32px;">Filter Keyword</div>
<div class="a" style="left:446.00px;top:384.80px;width:160.00px;height:26.60px;background:#ffffff;border:1.6px solid #666c6a;box-sizing:border-box;"></div>
<div class="a" style="left:586.50px;top:386.40px;width:18.50px;height:24.50px;background:#ececec;"></div>
<div class="a" style="left:603.00px;top:386.40px;width:2.00px;height:24.50px;background:#5d6361;"></div>
<div class="a" style="left:586.50px;top:408.40px;width:18.50px;height:2.50px;background:#5d6361;"></div>
<svg class="a" style="left:590.25px;top:396.15px" width="9" height="5" viewBox="0 0 9 5"><path d="M0 0H9L4.5 5Z" fill="#000"/></svg>
<div class="t" style="left:457.50px;top:389.37px;font-size:11.5px;line-height:11.5px;font-weight:bold;color:#1b1b1b;letter-spacing:0.32px;">Select</div>
<div class="a" style="left:607.80px;top:384.80px;width:90.00px;height:26.60px;background:#ffffff;border:1.6px solid #666c6a;box-sizing:border-box;"></div>
<div class="a" style="left:708.00px;top:388.00px;width:22.80px;height:22.00px;background:#fafafa;border-top:1px solid #e4e6e6;border-left:1px solid #e4e6e6;box-sizing:border-box;"></div>
<div class="a" style="left:730.80px;top:386.00px;width:2.00px;height:26.00px;background:#555b59;"></div>
<div class="a" style="left:706.00px;top:410.00px;width:26.80px;height:2.00px;background:#555b59;"></div>
<svg class="a" style="left:710.90px;top:388.00px" width="17" height="22" viewBox="0 0 17 22">
<path d="M1.5 6.5 L7.2 1 L7 3.8 C10.8 3.6 14.8 6.2 15.8 11.6 C13.8 9.6 11.2 8.9 7.4 9.1 L7.6 11.8 Z" fill="#1f6fba"/>
<path d="M7 4.6 C10 4.6 13 6.5 14.5 9.5 C12.5 8.2 10 7.8 7.2 8 Z" fill="#3a9ad8" opacity="0.6"/>
<g transform="rotate(180 8.5 11.5)"><path d="M1.5 6.5 L7.2 1 L7 3.8 C10.8 3.6 14.8 6.2 15.8 11.6 C13.8 9.6 11.2 8.9 7.4 9.1 L7.6 11.8 Z" fill="#5aae2e"/>
<path d="M7 4.6 C10 4.6 13 6.5 14.5 9.5 C12.5 8.2 10 7.8 7.2 8 Z" fill="#9ad35a" opacity="0.7"/></g>
</svg>
<div class="a" style="left:776.60px;top:359.40px;width:268.00px;height:62.60px;border:1.6px solid #56635f;box-sizing:border-box;"></div>
<div class="a" style="left:784.80px;top:356.40px;width:70.00px;height:7.00px;background:#f2f9f9;"></div>
<div class="t" style="left:790.80px;top:354.23px;font-size:14.5px;line-height:14.5px;font-weight:bold;color:#141414;">Sort By:</div>
<div class="t" style="left:786.40px;top:371.27px;font-size:11.5px;line-height:11.5px;font-weight:bold;color:#1b1b1b;letter-spacing:0.32px;">Select Field</div>
<div class="a" style="left:786.40px;top:387.70px;width:178.30px;height:25.60px;background:#ffffff;border:1.6px solid #666c6a;box-sizing:border-box;"></div>
<div class="a" style="left:945.20px;top:389.30px;width:18.50px;height:23.50px;background:#ececec;"></div>
<div class="a" style="left:961.70px;top:389.30px;width:2.00px;height:23.50px;background:#5d6361;"></div>
<div class="a" style="left:945.20px;top:410.30px;width:18.50px;height:2.50px;background:#5d6361;"></div>
<svg class="a" style="left:948.95px;top:398.55px" width="9" height="5" viewBox="0 0 9 5"><path d="M0 0H9L4.5 5Z" fill="#000"/></svg>
<div class="t" style="left:798.40px;top:392.07px;font-size:11.5px;line-height:11.5px;font-weight:bold;color:#1b1b1b;letter-spacing:0.32px;">ID</div>
<div class="a" style="left:974.50px;top:389.70px;width:25.20px;height:17.80px;background:#fafafa;border-top:1px solid #e4e6e6;border-left:1px solid #e4e6e6;box-sizing:border-box;"></div>
<div class="a" style="left:999.70px;top:387.70px;width:2.00px;height:21.80px;background:#555b59;"></div>
<div class="a" style="left:972.50px;top:407.50px;width:29.20px;height:2.00px;background:#555b59;"></div>
<svg class="a" style="left:979px;top:392px" width="18" height="13" viewBox="0 0 18 13"><path d="M9 0L18 13H0Z" fill="#0d2467"/></svg>
<div class="a" style="left:1002.10px;top:389.70px;width:23.90px;height:17.80px;background:#fafafa;border-top:1px solid #e4e6e6;border-left:1px solid #e4e6e6;box-sizing:border-box;"></div>
<div class="a" style="left:1026.00px;top:387.70px;width:2.00px;height:21.80px;background:#555b59;"></div>
<div class="a" style="left:1000.10px;top:407.50px;width:27.90px;height:2.00px;background:#555b59;"></div>
<svg class="a" style="left:1005px;top:392px" width="19" height="13" viewBox="0 0 19 13"><path d="M0 0H19L9.5 13Z" fill="#0d2467"/></svg>
<div class="a" style="left:1072.40px;top:359.30px;width:187.30px;height:62.50px;border:1.6px solid #56635f;box-sizing:border-box;"></div>
<div class="a" style="left:1081.20px;top:356.30px;width:123.00px;height:7.00px;background:#f2f9f9;"></div>
<div class="t" style="left:1087.20px;top:353.03px;font-size:14.5px;line-height:14.5px;font-weight:bold;color:#141414;">Control Buttons</div>
<div class="a" style="left:1092.30px;top:380.00px;width:33.00px;height:32.00px;background:#fbfbfb;border-top:1px solid #e6e8e8;border-left:1px solid #e6e8e8;box-sizing:border-box;"></div>
<div class="a" style="left:1125.30px;top:378.50px;width:1.60px;height:35.10px;background:#6a6f6e;"></div>
<div class="a" style="left:1090.80px;top:412.00px;width:36.10px;height:1.60px;background:#6a6f6e;"></div>
<svg class="a" style="left:1095px;top:382.5px" width="27" height="27" viewBox="0 0 27 27">
<defs><linearGradient id="eg" x1="0" y1="0" x2="1" y2="1"><stop offset="0" stop-color="#fdf6e6"/><stop offset="1" stop-color="#f3c99c"/></linearGradient>
<linearGradient id="er" x1="0" y1="0" x2="0" y2="1"><stop offset="0" stop-color="#4a4a44"/><stop offset="1" stop-color="#24463f"/></linearGradient></defs>
<circle cx="13.5" cy="13.5" r="12.2" fill="url(#eg)" stroke="url(#er)" stroke-width="2.2"/>
<path d="M5.6 21.2 L7.05 15.0 L17.55 6.0 L21.45 10.6 L10.95 19.6 Z" fill="#262b2a"/>
<path d="M8.3 15.4 L17.6 7.6 L20 10.5 L10.7 18.3 Z" fill="#9dbfcb"/>
<path d="M9 15.9 L17.8 8.5 L18.6 9.5 L9.8 16.9 Z" fill="#e8f2f4"/>
</svg>
<div class="a" style="left:1146.00px;top:380.00px;width:33.50px;height:32.00px;background:#fbfbfb;border-top:1px solid #e6e8e8;border-left:1px solid #e6e8e8;box-sizing:border-box;"></div>
<div class="a" style="left:1179.50px;top:378.50px;width:1.60px;height:35.10px;background:#6a6f6e;"></div>
<div class="a" style="left:1144.50px;top:412.00px;width:36.60px;height:1.60px;background:#6a6f6e;"></div>
<svg class="a" style="left:1150px;top:383.5px" width="25" height="25" viewBox="0 0 25 25">
<circle cx="12.5" cy="12.5" r="12.3" fill="#cc0f16"/>
<path d="M6.8 6.2 L18.2 8.2" stroke="#fff" stroke-width="1.6"/><path d="M8 9.2 L9.2 19.8 H15.8 L17 9.2Z" fill="none" stroke="#fff" stroke-width="1.4"/>
<path d="M11 10.8V18.2M14 10.8V18.2" stroke="#fff" stroke-width="1"/>
</svg>
<div class="a" style="left:1200.00px;top:380.00px;width:33.60px;height:32.00px;background:#fbfbfb;border-top:1px solid #e6e8e8;border-left:1px solid #e6e8e8;box-sizing:border-box;"></div>
<div class="a" style="left:1233.60px;top:378.50px;width:1.60px;height:35.10px;background:#6a6f6e;"></div>
<div class="a" style="left:1198.50px;top:412.00px;width:36.70px;height:1.60px;background:#6a6f6e;"></div>
<svg class="a" style="left:1203px;top:382px" width="28" height="27" viewBox="0 0 28 27">
<rect x="11" y="3.2" width="15.8" height="20.6" rx="1" fill="#fff" stroke="#2b7a4f" stroke-width="1"/>
<g fill="#1f6e42"><rect x="12.6" y="5.2" width="3.6" height="2.6"/><rect x="17.2" y="5.2" width="3.6" height="2.6"/><rect x="21.8" y="5.2" width="3.6" height="2.6"/><rect x="12.6" y="8.8" width="3.6" height="2.6"/><rect x="17.2" y="8.8" width="3.6" height="2.6"/><rect x="21.8" y="8.8" width="3.6" height="2.6"/><rect x="12.6" y="12.4" width="3.6" height="2.6"/><rect x="17.2" y="12.4" width="3.6" height="2.6"/><rect x="21.8" y="12.4" width="3.6" height="2.6"/><rect x="12.6" y="16.0" width="3.6" height="2.6"/><rect x="17.2" y="16.0" width="3.6" height="2.6"/><rect x="21.8" y="16.0" width="3.6" height="2.6"/><rect x="12.6" y="19.6" width="3.6" height="2.6"/><rect x="17.2" y="19.6" width="3.6" height="2.6"/><rect x="21.8" y="19.6" width="3.6" height="2.6"/></g>
<path d="M0.5 3.8 L15 1 V26 L0.5 23.2Z" fill="#1d7044"/>
<path d="M4.5 9 L7 9 L8 11.5 L9 9 L11.5 9 L9.5 13.5 L11.5 18 L9 18 L8 15.5 L7 18 L4.5 18 L6.5 13.5Z" fill="#fff"/>
</svg>
<div class="a" style="left:14.50px;top:435.00px;width:1246.50px;height:231.50px;background:#eef5f5;border-left:1.5px solid #5b6361;border-top:1.2px solid #5b6361;border-right:1.2px solid #5b6361;box-sizing:border-box;"></div>
<div class="a" style="left:14.50px;top:449.50px;width:1246.50px;height:1.50px;background:#333;"></div>
<div class="a" style="left:104.90px;top:435.00px;width:1.20px;height:15.00px;background:#333;"></div>
<div class="a" style="left:254.90px;top:435.00px;width:1.20px;height:15.00px;background:#333;"></div>
<div class="a" style="left:404.40px;top:435.00px;width:1.20px;height:15.00px;background:#333;"></div>
<div class="a" style="left:583.40px;top:435.00px;width:1.20px;height:15.00px;background:#333;"></div>
<div class="a" style="left:762.90px;top:435.00px;width:1.20px;height:15.00px;background:#333;"></div>
<div class="a" style="left:882.40px;top:435.00px;width:1.20px;height:15.00px;background:#333;"></div>
<div class="a" style="left:1001.90px;top:435.00px;width:1.20px;height:15.00px;background:#333;"></div>
<div class="a" style="left:1120.90px;top:435.00px;width:1.20px;height:15.00px;background:#333;"></div>
<div class="a" style="left:1240.40px;top:435.00px;width:1.20px;height:15.00px;background:#333;"></div>
<div class="a" style="left:14.5px;top:435px;width:1245.3px;height:231.5px;overflow:hidden;">
<div class="t" style="left:-100.80px;width:300px;text-align:center;top:3.02px;font-size:12.5px;line-height:12.5px;color:#1e1e1e;transform:scaleX(1.038);">ID</div>
<div class="t" style="left:19.70px;width:300px;text-align:center;top:3.02px;font-size:12.5px;line-height:12.5px;color:#1e1e1e;transform:scaleX(1.004);">Invoice No</div>
<div class="t" style="left:169.45px;width:300px;text-align:center;top:3.02px;font-size:12.5px;line-height:12.5px;color:#1e1e1e;transform:scaleX(1.005);">Invoice Date</div>
<div class="t" style="left:333.70px;width:300px;text-align:center;top:3.02px;font-size:12.5px;line-height:12.5px;color:#1e1e1e;transform:scaleX(0.980);">Client Name</div>
<div class="t" style="left:512.95px;width:300px;text-align:center;top:3.02px;font-size:12.5px;line-height:12.5px;color:#1e1e1e;transform:scaleX(0.987);">Project Name</div>
<div class="t" style="left:662.45px;width:300px;text-align:center;top:3.02px;font-size:12.5px;line-height:12.5px;color:#1e1e1e;transform:scaleX(0.982);">Billing Period</div>
<div class="t" style="left:781.95px;width:300px;text-align:center;top:3.02px;font-size:12.5px;line-height:12.5px;color:#1e1e1e;transform:scaleX(1.004);">Invoice Status</div>
<div class="t" style="left:901.20px;width:300px;text-align:center;top:3.02px;font-size:12.5px;line-height:12.5px;color:#1e1e1e;transform:scaleX(0.998);">Subtotal</div>
<div class="t" style="left:1020.45px;width:300px;text-align:center;top:3.02px;font-size:12.5px;line-height:12.5px;color:#1e1e1e;transform:scaleX(1.032);">Tax Amount</div>
<div class="t" style="left:1116.50px;width:300px;text-align:center;top:3.02px;font-size:12.5px;line-height:12.5px;color:#1e1e1e;transform:scaleX(0.977);">Due Date</div>
<div class="a" style="left:1px;top:31.19999999999999px;width:1260px;height:15.3px;background:#0c6fd2;border-top:1px dotted #7fb2ea;border-bottom:1px dotted #7fb2ea;box-sizing:border-box;"></div>
<div class="t" style="left:-100.80px;width:300px;text-align:center;top:18.72px;font-size:12.5px;line-height:12.5px;color:#141414;transform:scaleX(0.990);">1</div>
<div class="t" style="left:19.70px;width:300px;text-align:center;top:18.72px;font-size:12.5px;line-height:12.5px;color:#141414;transform:scaleX(0.990);">1</div>
<div class="t" style="left:169.45px;width:300px;text-align:center;top:18.72px;font-size:12.5px;line-height:12.5px;color:#141414;transform:scaleX(0.998);">16-Oct-2024</div>
<div class="t" style="left:333.70px;width:300px;text-align:center;top:18.72px;font-size:12.5px;line-height:12.5px;color:#141414;transform:scaleX(0.979);">City Diagnostics</div>
<div class="t" style="left:512.95px;width:300px;text-align:center;top:18.72px;font-size:12.5px;line-height:12.5px;color:#141414;transform:scaleX(0.976);">Radiology KPI Dashboard</div>
<div class="t" style="left:662.45px;width:300px;text-align:center;top:18.72px;font-size:12.5px;line-height:12.5px;color:#141414;transform:scaleX(0.979);">Sep-Oct 2024</div>
<div class="t" style="left:781.95px;width:300px;text-align:center;top:18.72px;font-size:12.5px;line-height:12.5px;color:#141414;transform:scaleX(0.967);">Sent</div>
<div class="t" style="left:901.20px;width:300px;text-align:center;top:18.72px;font-size:12.5px;line-height:12.5px;color:#141414;transform:scaleX(1.012);">250000.0</div>
<div class="t" style="left:1020.45px;width:300px;text-align:center;top:18.72px;font-size:12.5px;line-height:12.5px;color:#141414;transform:scaleX(1.055);">0.0</div>
<div class="t" style="left:-100.80px;width:300px;text-align:center;top:33.95px;font-size:12.5px;line-height:12.5px;color:#b5ecff;transform:scaleX(0.990);">2</div>
<div class="t" style="left:19.70px;width:300px;text-align:center;top:33.95px;font-size:12.5px;line-height:12.5px;color:#b5ecff;transform:scaleX(0.990);">2</div>
<div class="t" style="left:169.45px;width:300px;text-align:center;top:33.95px;font-size:12.5px;line-height:12.5px;color:#b5ecff;transform:scaleX(0.996);">5-Nov-2024</div>
<div class="t" style="left:333.70px;width:300px;text-align:center;top:33.95px;font-size:12.5px;line-height:12.5px;color:#b5ecff;transform:scaleX(0.955);">OceanLogix 3PL</div>
<div class="t" style="left:512.95px;width:300px;text-align:center;top:33.95px;font-size:12.5px;line-height:12.5px;color:#b5ecff;transform:scaleX(0.969);">3PL KPI Dashboard</div>
<div class="t" style="left:662.45px;width:300px;text-align:center;top:33.95px;font-size:12.5px;line-height:12.5px;color:#b5ecff;transform:scaleX(0.999);">1-Oct-2024</div>
<div class="t" style="left:781.95px;width:300px;text-align:center;top:33.95px;font-size:12.5px;line-height:12.5px;color:#b5ecff;transform:scaleX(0.967);">Sent</div>
<div class="t" style="left:901.20px;width:300px;text-align:center;top:33.95px;font-size:12.5px;line-height:12.5px;color:#b5ecff;transform:scaleX(1.019);">6000.0</div>
<div class="t" style="left:1020.45px;width:300px;text-align:center;top:33.95px;font-size:12.5px;line-height:12.5px;color:#b5ecff;transform:scaleX(1.055);">0.0</div>
<div class="t" style="left:-100.80px;width:300px;text-align:center;top:49.18px;font-size:12.5px;line-height:12.5px;color:#141414;transform:scaleX(0.990);">3</div>
<div class="t" style="left:19.70px;width:300px;text-align:center;top:49.18px;font-size:12.5px;line-height:12.5px;color:#141414;transform:scaleX(0.990);">3</div>
<div class="t" style="left:169.45px;width:300px;text-align:center;top:49.18px;font-size:12.5px;line-height:12.5px;color:#141414;transform:scaleX(0.984);">1-Dec-2024</div>
<div class="t" style="left:333.70px;width:300px;text-align:center;top:49.18px;font-size:12.5px;line-height:12.5px;color:#141414;transform:scaleX(0.966);">FinEdge Advisors</div>
<div class="t" style="left:512.95px;width:300px;text-align:center;top:49.18px;font-size:12.5px;line-height:12.5px;color:#141414;transform:scaleX(0.994);">FP&amp;A Automation</div>
<div class="t" style="left:662.45px;width:300px;text-align:center;top:49.18px;font-size:12.5px;line-height:12.5px;color:#141414;transform:scaleX(0.996);">1-Nov-2024</div>
<div class="t" style="left:781.95px;width:300px;text-align:center;top:49.18px;font-size:12.5px;line-height:12.5px;color:#141414;transform:scaleX(1.021);">Draft</div>
<div class="t" style="left:901.20px;width:300px;text-align:center;top:49.18px;font-size:12.5px;line-height:12.5px;color:#141414;transform:scaleX(1.012);">120000.0</div>
<div class="t" style="left:1020.45px;width:300px;text-align:center;top:49.18px;font-size:12.5px;line-height:12.5px;color:#141414;transform:scaleX(1.015);">21600.0</div>
<div class="t" style="left:-100.80px;width:300px;text-align:center;top:64.41px;font-size:12.5px;line-height:12.5px;color:#141414;transform:scaleX(0.990);">4</div>
<div class="t" style="left:19.70px;width:300px;text-align:center;top:64.41px;font-size:12.5px;line-height:12.5px;color:#141414;transform:scaleX(0.990);">4</div>
<div class="t" style="left:169.45px;width:300px;text-align:center;top:64.41px;font-size:12.5px;line-height:12.5px;color:#141414;transform:scaleX(0.983);">12-Sep-2024</div>
<div class="t" style="left:333.70px;width:300px;text-align:center;top:64.41px;font-size:12.5px;line-height:12.5px;color:#141414;transform:scaleX(0.964);">AeroCater Services</div>
<div class="t" style="left:512.95px;width:300px;text-align:center;top:64.41px;font-size:12.5px;line-height:12.5px;color:#141414;transform:scaleX(0.971);">Catering Ops KPIs</div>
<div class="t" style="left:662.45px;width:300px;text-align:center;top:64.41px;font-size:12.5px;line-height:12.5px;color:#141414;transform:scaleX(0.973);">Jul-Sep 2024</div>
<div class="t" style="left:781.95px;width:300px;text-align:center;top:64.41px;font-size:12.5px;line-height:12.5px;color:#141414;transform:scaleX(0.939);">Paid</div>
<div class="t" style="left:901.20px;width:300px;text-align:center;top:64.41px;font-size:12.5px;line-height:12.5px;color:#141414;transform:scaleX(1.012);">320000.0</div>
<div class="t" style="left:1020.45px;width:300px;text-align:center;top:64.41px;font-size:12.5px;line-height:12.5px;color:#141414;transform:scaleX(1.015);">57600.0</div>
<div class="t" style="left:-100.80px;width:300px;text-align:center;top:79.64px;font-size:12.5px;line-height:12.5px;color:#141414;transform:scaleX(0.990);">5</div>
<div class="t" style="left:19.70px;width:300px;text-align:center;top:79.64px;font-size:12.5px;line-height:12.5px;color:#141414;transform:scaleX(0.990);">5</div>
<div class="t" style="left:169.45px;width:300px;text-align:center;top:79.64px;font-size:12.5px;line-height:12.5px;color:#141414;transform:scaleX(0.984);">15-Dec-2024</div>
<div class="t" style="left:333.70px;width:300px;text-align:center;top:79.64px;font-size:12.5px;line-height:12.5px;color:#141414;transform:scaleX(1.001);">GlobalTech Inc</div>
<div class="t" style="left:512.95px;width:300px;text-align:center;top:79.64px;font-size:12.5px;line-height:12.5px;color:#141414;transform:scaleX(0.980);">Data Lake Setup</div>
<div class="t" style="left:662.45px;width:300px;text-align:center;top:79.64px;font-size:12.5px;line-height:12.5px;color:#141414;transform:scaleX(0.979);">Nov-Dec 2024</div>
<div class="t" style="left:781.95px;width:300px;text-align:center;top:79.64px;font-size:12.5px;line-height:12.5px;color:#141414;transform:scaleX(0.967);">Sent</div>
<div class="t" style="left:901.20px;width:300px;text-align:center;top:79.64px;font-size:12.5px;line-height:12.5px;color:#141414;transform:scaleX(1.019);">7800.0</div>
<div class="t" style="left:1020.45px;width:300px;text-align:center;top:79.64px;font-size:12.5px;line-height:12.5px;color:#141414;transform:scaleX(1.055);">0.0</div>
<div class="t" style="left:-100.80px;width:300px;text-align:center;top:94.87px;font-size:12.5px;line-height:12.5px;color:#141414;transform:scaleX(0.990);">6</div>
<div class="t" style="left:19.70px;width:300px;text-align:center;top:94.87px;font-size:12.5px;line-height:12.5px;color:#141414;transform:scaleX(0.990);">6</div>
<div class="t" style="left:169.45px;width:300px;text-align:center;top:94.87px;font-size:12.5px;line-height:12.5px;color:#141414;transform:scaleX(0.998);">25-Oct-2024</div>
<div class="t" style="left:333.70px;width:300px;text-align:center;top:94.87px;font-size:12.5px;line-height:12.5px;color:#141414;transform:scaleX(0.963);">MedCare Hospitals</div>
<div class="t" style="left:512.95px;width:300px;text-align:center;top:94.87px;font-size:12.5px;line-height:12.5px;color:#141414;transform:scaleX(0.982);">Hospital Operations KPIs</div>
<div class="t" style="left:662.45px;width:300px;text-align:center;top:94.87px;font-size:12.5px;line-height:12.5px;color:#141414;transform:scaleX(0.999);">1-Oct-2024</div>
<div class="t" style="left:781.95px;width:300px;text-align:center;top:94.87px;font-size:12.5px;line-height:12.5px;color:#141414;transform:scaleX(0.967);">Sent</div>
<div class="t" style="left:901.20px;width:300px;text-align:center;top:94.87px;font-size:12.5px;line-height:12.5px;color:#141414;transform:scaleX(1.015);">90000.0</div>
<div class="t" style="left:1020.45px;width:300px;text-align:center;top:94.87px;font-size:12.5px;line-height:12.5px;color:#141414;transform:scaleX(1.015);">16200.0</div>
<div class="t" style="left:-100.80px;width:300px;text-align:center;top:110.10px;font-size:12.5px;line-height:12.5px;color:#141414;transform:scaleX(0.990);">7</div>
<div class="t" style="left:19.70px;width:300px;text-align:center;top:110.10px;font-size:12.5px;line-height:12.5px;color:#141414;transform:scaleX(0.990);">7</div>
<div class="t" style="left:169.45px;width:300px;text-align:center;top:110.10px;font-size:12.5px;line-height:12.5px;color:#141414;transform:scaleX(0.984);">28-Dec-2024</div>
<div class="t" style="left:333.70px;width:300px;text-align:center;top:110.10px;font-size:12.5px;line-height:12.5px;color:#141414;transform:scaleX(0.997);">BrightRetail Pvt Ltd</div>
<div class="t" style="left:512.95px;width:300px;text-align:center;top:110.10px;font-size:12.5px;line-height:12.5px;color:#141414;transform:scaleX(0.963);">Retail Sales Model</div>
<div class="t" style="left:662.45px;width:300px;text-align:center;top:110.10px;font-size:12.5px;line-height:12.5px;color:#141414;transform:scaleX(0.968);">Sep-Dec 2024</div>
<div class="t" style="left:781.95px;width:300px;text-align:center;top:110.10px;font-size:12.5px;line-height:12.5px;color:#141414;transform:scaleX(0.955);">Cancelled</div>
<div class="t" style="left:901.20px;width:300px;text-align:center;top:110.10px;font-size:12.5px;line-height:12.5px;color:#141414;transform:scaleX(1.012);">450000.0</div>
<div class="t" style="left:1020.45px;width:300px;text-align:center;top:110.10px;font-size:12.5px;line-height:12.5px;color:#141414;transform:scaleX(1.015);">81000.0</div>
<div class="t" style="left:-100.80px;width:300px;text-align:center;top:125.33px;font-size:12.5px;line-height:12.5px;color:#141414;transform:scaleX(0.990);">8</div>
<div class="t" style="left:19.70px;width:300px;text-align:center;top:125.33px;font-size:12.5px;line-height:12.5px;color:#141414;transform:scaleX(0.990);">8</div>
<div class="t" style="left:169.45px;width:300px;text-align:center;top:125.33px;font-size:12.5px;line-height:12.5px;color:#141414;transform:scaleX(1.000);">30-Apr-2024</div>
<div class="t" style="left:333.70px;width:300px;text-align:center;top:125.33px;font-size:12.5px;line-height:12.5px;color:#141414;transform:scaleX(0.973);">EduSpark Learning</div>
<div class="t" style="left:512.95px;width:300px;text-align:center;top:125.33px;font-size:12.5px;line-height:12.5px;color:#141414;transform:scaleX(0.994);">Learning Analytics</div>
<div class="t" style="left:662.45px;width:300px;text-align:center;top:125.33px;font-size:12.5px;line-height:12.5px;color:#141414;transform:scaleX(0.991);">Mar-Apr 2024</div>
<div class="t" style="left:781.95px;width:300px;text-align:center;top:125.33px;font-size:12.5px;line-height:12.5px;color:#141414;transform:scaleX(0.939);">Paid</div>
<div class="t" style="left:901.20px;width:300px;text-align:center;top:125.33px;font-size:12.5px;line-height:12.5px;color:#141414;transform:scaleX(1.019);">6000.0</div>
<div class="t" style="left:1020.45px;width:300px;text-align:center;top:125.33px;font-size:12.5px;line-height:12.5px;color:#141414;transform:scaleX(1.055);">0.0</div>
<div class="t" style="left:-100.80px;width:300px;text-align:center;top:140.56px;font-size:12.5px;line-height:12.5px;color:#141414;transform:scaleX(0.990);">9</div>
<div class="t" style="left:19.70px;width:300px;text-align:center;top:140.56px;font-size:12.5px;line-height:12.5px;color:#141414;transform:scaleX(0.990);">9</div>
<div class="t" style="left:169.45px;width:300px;text-align:center;top:140.56px;font-size:12.5px;line-height:12.5px;color:#141414;transform:scaleX(0.995);">30-Nov-2024</div>
<div class="t" style="left:333.70px;width:300px;text-align:center;top:140.56px;font-size:12.5px;line-height:12.5px;color:#141414;transform:scaleX(0.955);">OceanLogix 3PL</div>
<div class="t" style="left:512.95px;width:300px;text-align:center;top:140.56px;font-size:12.5px;line-height:12.5px;color:#141414;transform:scaleX(0.969);">3PL KPI Dashboard</div>
<div class="t" style="left:662.45px;width:300px;text-align:center;top:140.56px;font-size:12.5px;line-height:12.5px;color:#141414;transform:scaleX(0.996);">1-Nov-2024</div>
<div class="t" style="left:781.95px;width:300px;text-align:center;top:140.56px;font-size:12.5px;line-height:12.5px;color:#141414;transform:scaleX(0.967);">Sent</div>
<div class="t" style="left:901.20px;width:300px;text-align:center;top:140.56px;font-size:12.5px;line-height:12.5px;color:#141414;transform:scaleX(1.019);">6000.0</div>
<div class="t" style="left:1020.45px;width:300px;text-align:center;top:140.56px;font-size:12.5px;line-height:12.5px;color:#141414;transform:scaleX(1.055);">0.0</div>
<div class="t" style="left:-100.80px;width:300px;text-align:center;top:155.79px;font-size:12.5px;line-height:12.5px;color:#141414;transform:scaleX(0.990);">10</div>
<div class="t" style="left:19.70px;width:300px;text-align:center;top:155.79px;font-size:12.5px;line-height:12.5px;color:#141414;transform:scaleX(0.990);">10</div>
<div class="t" style="left:169.45px;width:300px;text-align:center;top:155.79px;font-size:12.5px;line-height:12.5px;color:#141414;transform:scaleX(0.984);">20-Dec-2024</div>
<div class="t" style="left:333.70px;width:300px;text-align:center;top:155.79px;font-size:12.5px;line-height:12.5px;color:#141414;transform:scaleX(0.963);">MedCare Hospitals</div>
<div class="t" style="left:512.95px;width:300px;text-align:center;top:155.79px;font-size:12.5px;line-height:12.5px;color:#141414;transform:scaleX(0.982);">Hospital Operations KPIs</div>
<div class="t" style="left:662.45px;width:300px;text-align:center;top:155.79px;font-size:12.5px;line-height:12.5px;color:#141414;transform:scaleX(0.984);">1-Dec-2024</div>
<div class="t" style="left:781.95px;width:300px;text-align:center;top:155.79px;font-size:12.5px;line-height:12.5px;color:#141414;transform:scaleX(1.021);">Draft</div>
<div class="t" style="left:901.20px;width:300px;text-align:center;top:155.79px;font-size:12.5px;line-height:12.5px;color:#141414;transform:scaleX(1.015);">95000.0</div>
<div class="t" style="left:1020.45px;width:300px;text-align:center;top:155.79px;font-size:12.5px;line-height:12.5px;color:#141414;transform:scaleX(1.015);">17100.0</div>
</div>
<div class="a" style="left:14.50px;top:647.50px;width:1246.50px;height:19.00px;background:#f5f3f3;border-left:1.5px solid #5b6361;border-right:1.2px solid #5b6361;border-bottom:1.5px solid #5b6361;box-sizing:border-box;"></div>
<div class="a" style="left:16.00px;top:647.50px;width:15.50px;height:17.50px;background:#f4f2f2;"></div>
<div class="a" style="left:31.50px;top:646.00px;width:2.50px;height:20.50px;background:#555b59;"></div>
<svg class="a" style="left:22.5px;top:652.5px" width="5" height="9" viewBox="0 0 5 9"><path d="M5 0V9L0 4.5Z" fill="#000"/></svg>
<div class="a" style="left:34.00px;top:648.50px;width:634.00px;height:16.50px;background:#efeded;"></div>
<div class="a" style="left:668.00px;top:646.00px;width:2.50px;height:20.50px;background:#555b59;"></div>
<div class="a" style="left:34.00px;top:664.50px;width:636.50px;height:2.50px;background:#555b59;"></div>
<div class="a" style="left:1241.70px;top:648.00px;width:16.30px;height:17.00px;background:#f4f2f2;"></div>
<div class="a" style="left:1258.00px;top:646.00px;width:2.50px;height:20.50px;background:#555b59;"></div>
<div class="a" style="left:1241.70px;top:664.50px;width:18.80px;height:2.50px;background:#555b59;"></div>
<svg class="a" style="left:1248px;top:653px" width="5.5" height="8" viewBox="0 0 5.5 8"><path d="M0 0V8L5.5 4Z" fill="#000"/></svg>
<div class="t" style="left:1050.30px;width:200px;text-align:right;top:675.00px;font-size:13px;line-height:13px;font-weight:bold;color:#141414;">10 Records</div>
</body></html>
